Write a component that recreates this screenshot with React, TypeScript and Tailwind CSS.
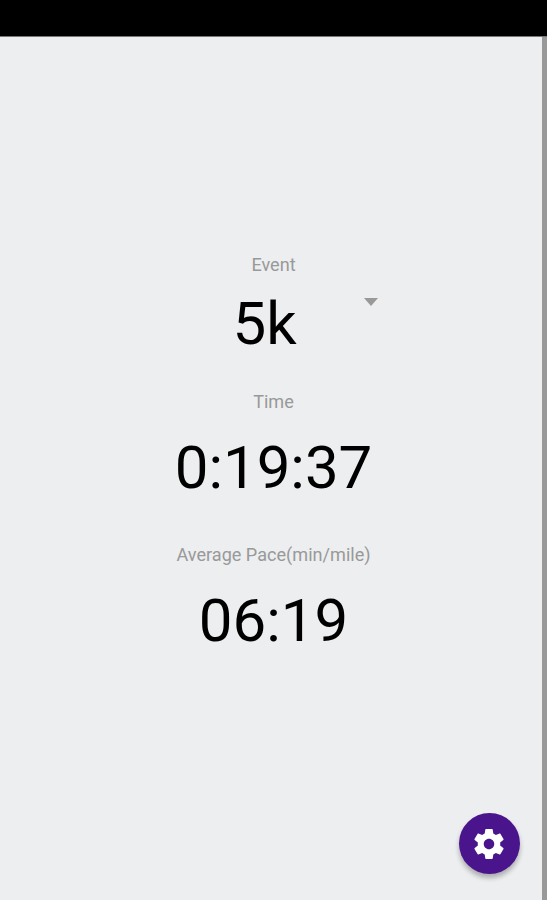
import React from "react";

const readouts = [
  { label: "Time", value: "0:19:37" },
  { label: "Average Pace(min/mile)", value: "06:19" },
];

const App = () => {
  return (
    <div className="flex h-[900px] w-[547px] flex-col overflow-hidden bg-[#eceef0] font-['Roboto',sans-serif]">
      {/* Status bar */}
      <div className="h-[37px] shrink-0 border-b border-[#777] bg-black" />

      <div className="flex flex-1">
        <main className="relative flex flex-1 flex-col items-center pt-[215px] pl-[5px]">
          <div className="text-[18.1px] leading-[26px] text-[#999]">Event</div>
          <div className="relative mt-[11px] mr-[18px] text-[60px] leading-[70px] text-black">
            5k
            {/* Dropdown arrow */}
            <svg className="absolute top-[9px] left-[132px] h-[8px] w-[14px]" viewBox="0 0 14 8">
              <path d="M0 0h14L7 8z" fill="#999" />
            </svg>
          </div>

          <div className="mt-[30px] text-[18.1px] leading-[26px] text-[#999]">{readouts[0].label}</div>
          <div className="mt-[18px] text-[60px] leading-[70px] text-black">{readouts[0].value}</div>

          <div className="mt-[39px] text-[18.1px] leading-[26px] text-[#999]">{readouts[1].label}</div>
          <div className="mt-[18px] text-[60px] leading-[70px] text-black">{readouts[1].value}</div>

          <button
            aria-label="Settings"
            className="absolute right-[22px] bottom-[26px] flex h-[61px] w-[61px] items-center justify-center rounded-full bg-[#4a148c] pr-px shadow-[0_4px_5px_rgba(0,0,0,0.28)]"
          >
            <svg className="h-[36px] w-[36px]" viewBox="0 0 24 24" fill="#fff">
              <path d="M19.43 12.98c.04-.32.07-.64.07-.98s-.03-.66-.07-.98l2.11-1.65c.19-.15.24-.42.12-.64l-2-3.46c-.12-.22-.39-.3-.61-.22l-2.49 1c-.52-.4-1.08-.73-1.69-.98l-.38-2.65C14.46 2.18 14.25 2 14 2h-4c-.25 0-.46.18-.49.42l-.38 2.65c-.61.25-1.17.59-1.69.98l-2.49-1c-.23-.09-.49 0-.61.22l-2 3.46c-.13.22-.07.49.12.64l2.11 1.65c-.04.32-.07.65-.07.98s.03.66.07.98l-2.11 1.65c-.19.15-.24.42-.12.64l2 3.46c.12.22.39.3.61.22l2.49-1c.52.4 1.08.73 1.69.98l.38 2.65c.03.24.24.42.49.42h4c.25 0 .46-.18.49-.42l.38-2.65c.61-.25 1.17-.59 1.69-.98l2.49 1c.23.09.49 0 .61-.22l2-3.46c.12-.22.07-.49-.12-.64l-2.11-1.65zM12 15.5c-1.93 0-3.5-1.57-3.5-3.5s1.57-3.5 3.5-3.5 3.5 1.57 3.5 3.5-1.57 3.5-3.5 3.5z" />
            </svg>
          </button>
        </main>
        <div className="w-[5px] shrink-0 bg-[#999]" />
      </div>
    </div>
  );
};

export default App;
